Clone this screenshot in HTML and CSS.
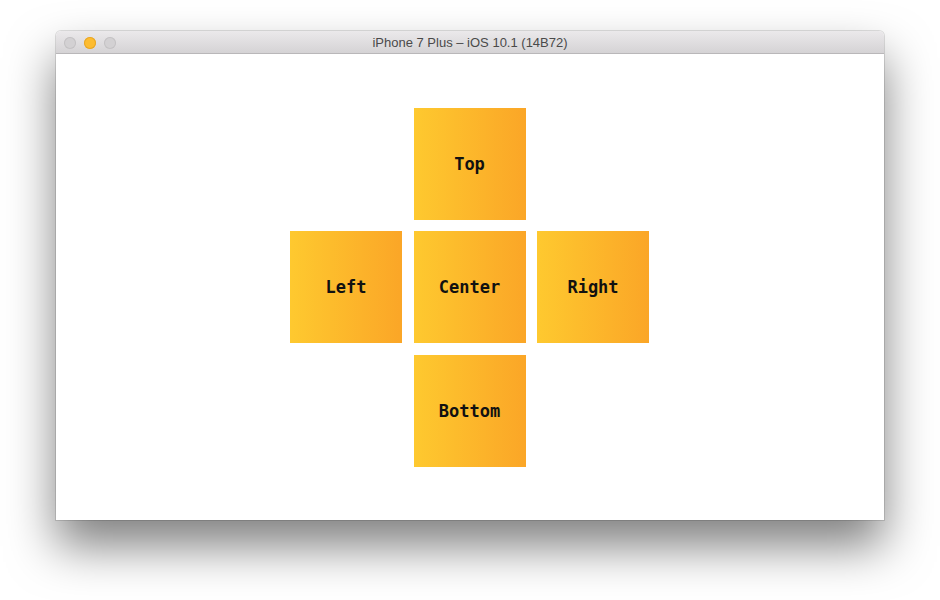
FILE: index.html
```html
<!DOCTYPE html>
<html>
<head>
<meta charset="utf-8">
<link rel="stylesheet" href="styles.css">
</head>
<body>
<div class="stage">
  <div class="window">
    <div class="titlebar">
      <div class="lights">
        <span class="light"></span>
        <span class="light light-min"></span>
        <span class="light"></span>
      </div>
      <div class="title">iPhone 7 Plus – iOS 10.1 (14B72)</div>
    </div>
    <div class="content">
      <div class="pad">
        <div class="box pos-top">Top</div>
        <div class="box pos-left">Left</div>
        <div class="box pos-center">Center</div>
        <div class="box pos-right">Right</div>
        <div class="box pos-bottom">Bottom</div>
      </div>
    </div>
  </div>
</div>
</body>
</html>
```

FILE: styles.css
```css
html, body {
  margin: 0;
  padding: 0;
  background: #ffffff;
}
.stage {
  width: 940px;
  height: 600px;
  padding: 31px 56px 0 56px;
  box-sizing: border-box;
  overflow: hidden;
}
.window {
  width: 828px;
  height: 489px;
  border-radius: 5px 5px 0 0;
  box-shadow: 0 0 0 1px rgba(0,0,0,0.12), 0 26px 48px rgba(0,0,0,0.5);
  display: flex;
  flex-direction: column;
  background: #fff;
}
.titlebar {
  height: 23px;
  flex: none;
  position: relative;
  background: linear-gradient(#ebe9eb, #d5d3d5);
  border-bottom: 1px solid #b9b7b9;
  border-radius: 5px 5px 0 0;
  box-sizing: border-box;
  display: flex;
  align-items: center;
  justify-content: center;
}
.lights {
  position: absolute;
  left: 8px;
  top: 6px;
  display: flex;
  gap: 8px;
}
.light {
  width: 12px;
  height: 12px;
  border-radius: 50%;
  background: #d3d1d3;
  box-shadow: inset 0 0 0 1px #c4c2c4;
  box-sizing: border-box;
}
.light-min {
  background: #fdbc30;
  box-shadow: inset 0 0 0 1px #e7a627;
}
.title {
  font-family: "Liberation Sans", Arial, sans-serif;
  font-size: 13px;
  color: #4a4a4a;
  padding-top: 1px;
}
.content {
  flex: 1;
  display: flex;
  align-items: center;
  justify-content: center;
  background: #fff;
}
.pad {
  display: grid;
  grid-template-columns: repeat(3, 112px);
  grid-template-rows: repeat(3, 112px);
  gap: 11.5px;
  margin-left: -1px;
}
.box {
  background: linear-gradient(to right, #fec92f, #fba627);
  display: flex;
  align-items: center;
  justify-content: center;
  font-family: "DejaVu Sans Mono", monospace;
  font-weight: bold;
  font-size: 17px;
  color: #111;
}
.pos-top { grid-column: 2; grid-row: 1; }
.pos-left { grid-column: 1; grid-row: 2; }
.pos-center { grid-column: 2; grid-row: 2; }
.pos-right { grid-column: 3; grid-row: 2; }
.pos-bottom { grid-column: 2; grid-row: 3; }
```
